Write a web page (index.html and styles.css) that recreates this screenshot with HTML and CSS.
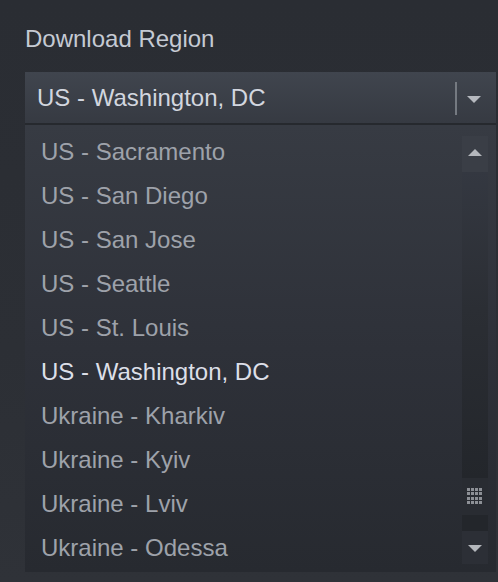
FILE: index.html
```html
<!DOCTYPE html>
<html>
<head>
<meta charset="utf-8">
<link rel="stylesheet" href="styles.css">
</head>
<body>
<div class="page">
  <div class="label">Download Region</div>
  <div class="select">
    <span class="value">US - Washington, DC</span>
    <span class="divider"></span>
    <span class="arrow-down"></span>
  </div>
  <div class="sep"></div>
  <div class="dropdown">
    <ul class="items">
      <li>US - Sacramento</li>
      <li>US - San Diego</li>
      <li>US - San Jose</li>
      <li>US - Seattle</li>
      <li>US - St. Louis</li>
      <li class="selected">US - Washington, DC</li>
      <li>Ukraine - Kharkiv</li>
      <li>Ukraine - Kyiv</li>
      <li>Ukraine - Lviv</li>
      <li>Ukraine - Odessa</li>
    </ul>
    <div class="scrollbar">
      <div class="btn up"><span class="tri-up"></span></div>
      <div class="track top"></div>
      <div class="thumb">
        <svg width="16" height="17" viewBox="0 0 16 17">
          <g fill="#8d9096">
            <rect x="0" y="0" width="3" height="3"/><rect x="4" y="0" width="3" height="3"/><rect x="8" y="0" width="3" height="3"/><rect x="12" y="0" width="3" height="3"/>
            <rect x="0" y="4" width="3" height="3"/><rect x="4" y="4" width="3" height="3"/><rect x="8" y="4" width="3" height="3"/><rect x="12" y="4" width="3" height="3"/>
            <rect x="0" y="9" width="3" height="3"/><rect x="4" y="9" width="3" height="3"/><rect x="8" y="9" width="3" height="3"/><rect x="12" y="9" width="3" height="3"/>
            <rect x="0" y="13" width="3" height="3"/><rect x="4" y="13" width="3" height="3"/><rect x="8" y="13" width="3" height="3"/><rect x="12" y="13" width="3" height="3"/>
          </g>
        </svg>
      </div>
      <div class="track bottom"></div>
      <div class="btn down"><span class="tri-down"></span></div>
    </div>
  </div>
</div>
</body>
</html>
```
FILE: styles.css
```css
html, body {
  margin: 0;
  padding: 0;
}
body {
  width: 498px;
  height: 582px;
  overflow: hidden;
  background: linear-gradient(180deg, #2a2d33 0%, #2c2f35 60%, #2f3238 100%);
  font-family: "Liberation Sans", Arial, sans-serif;
}
.page {
  padding: 25px 2px 0 25px;
}
.label {
  font-size: 24px;
  line-height: 28px;
  color: #c5cad3;
  margin-bottom: 19px;
}
.select {
  height: 51px;
  display: flex;
  align-items: center;
  background: linear-gradient(180deg, #40454e 0%, #363a42 100%);
}
.value {
  flex: 1;
  padding-left: 12px;
  font-size: 24px;
  line-height: 28px;
  color: #d2d6df;
}
.divider {
  width: 2px;
  height: 33px;
  background: #757a81;
  margin-top: 2px;
}
.arrow-down {
  width: 0;
  height: 0;
  border-left: 7px solid transparent;
  border-right: 7px solid transparent;
  border-top: 7px solid #b6b9bf;
  margin: 4px 15px 0 10px;
}
.sep {
  height: 2px;
  background: #26292e;
}
.dropdown {
  display: flex;
  height: 447px;
  background: linear-gradient(180deg, #373b43 0%, #2e3139 50%, #272a30 100%);
}
.items {
  flex: 1;
  list-style: none;
  margin: 0;
  padding: 5px 0 2px 0;
}
.items li {
  height: 44px;
  line-height: 44px;
  padding-left: 16px;
  font-size: 24px;
  color: #9ea2aa;
  white-space: nowrap;
}
.items li.selected {
  color: #dcdfe8;
}
.scrollbar {
  width: 26px;
  margin: 11px 8px 8px 0;
  display: flex;
  flex-direction: column;
}
.btn {
  display: flex;
  align-items: center;
  justify-content: center;
}
.btn.up {
  height: 36px;
  background: #3a3e46;
}
.btn.down {
  height: 33px;
  background: #2c2f36;
}
.tri-up {
  width: 0;
  height: 0;
  border-left: 7px solid transparent;
  border-right: 7px solid transparent;
  border-bottom: 7px solid #b4b7bc;
  margin-bottom: 3px;
}
.tri-down {
  width: 0;
  height: 0;
  border-left: 7px solid transparent;
  border-right: 7px solid transparent;
  border-top: 7px solid #b4b7bc;
  margin-top: 2px;
}
.track.top {
  height: 306px;
  background: linear-gradient(180deg, #343841 0%, #2b2e34 45%, #23262b 100%);
}
.track.bottom {
  height: 16px;
  background: #23262b;
}
.thumb {
  height: 37px;
  display: flex;
  align-items: center;
  justify-content: center;
  background: #292c32;
}
```
